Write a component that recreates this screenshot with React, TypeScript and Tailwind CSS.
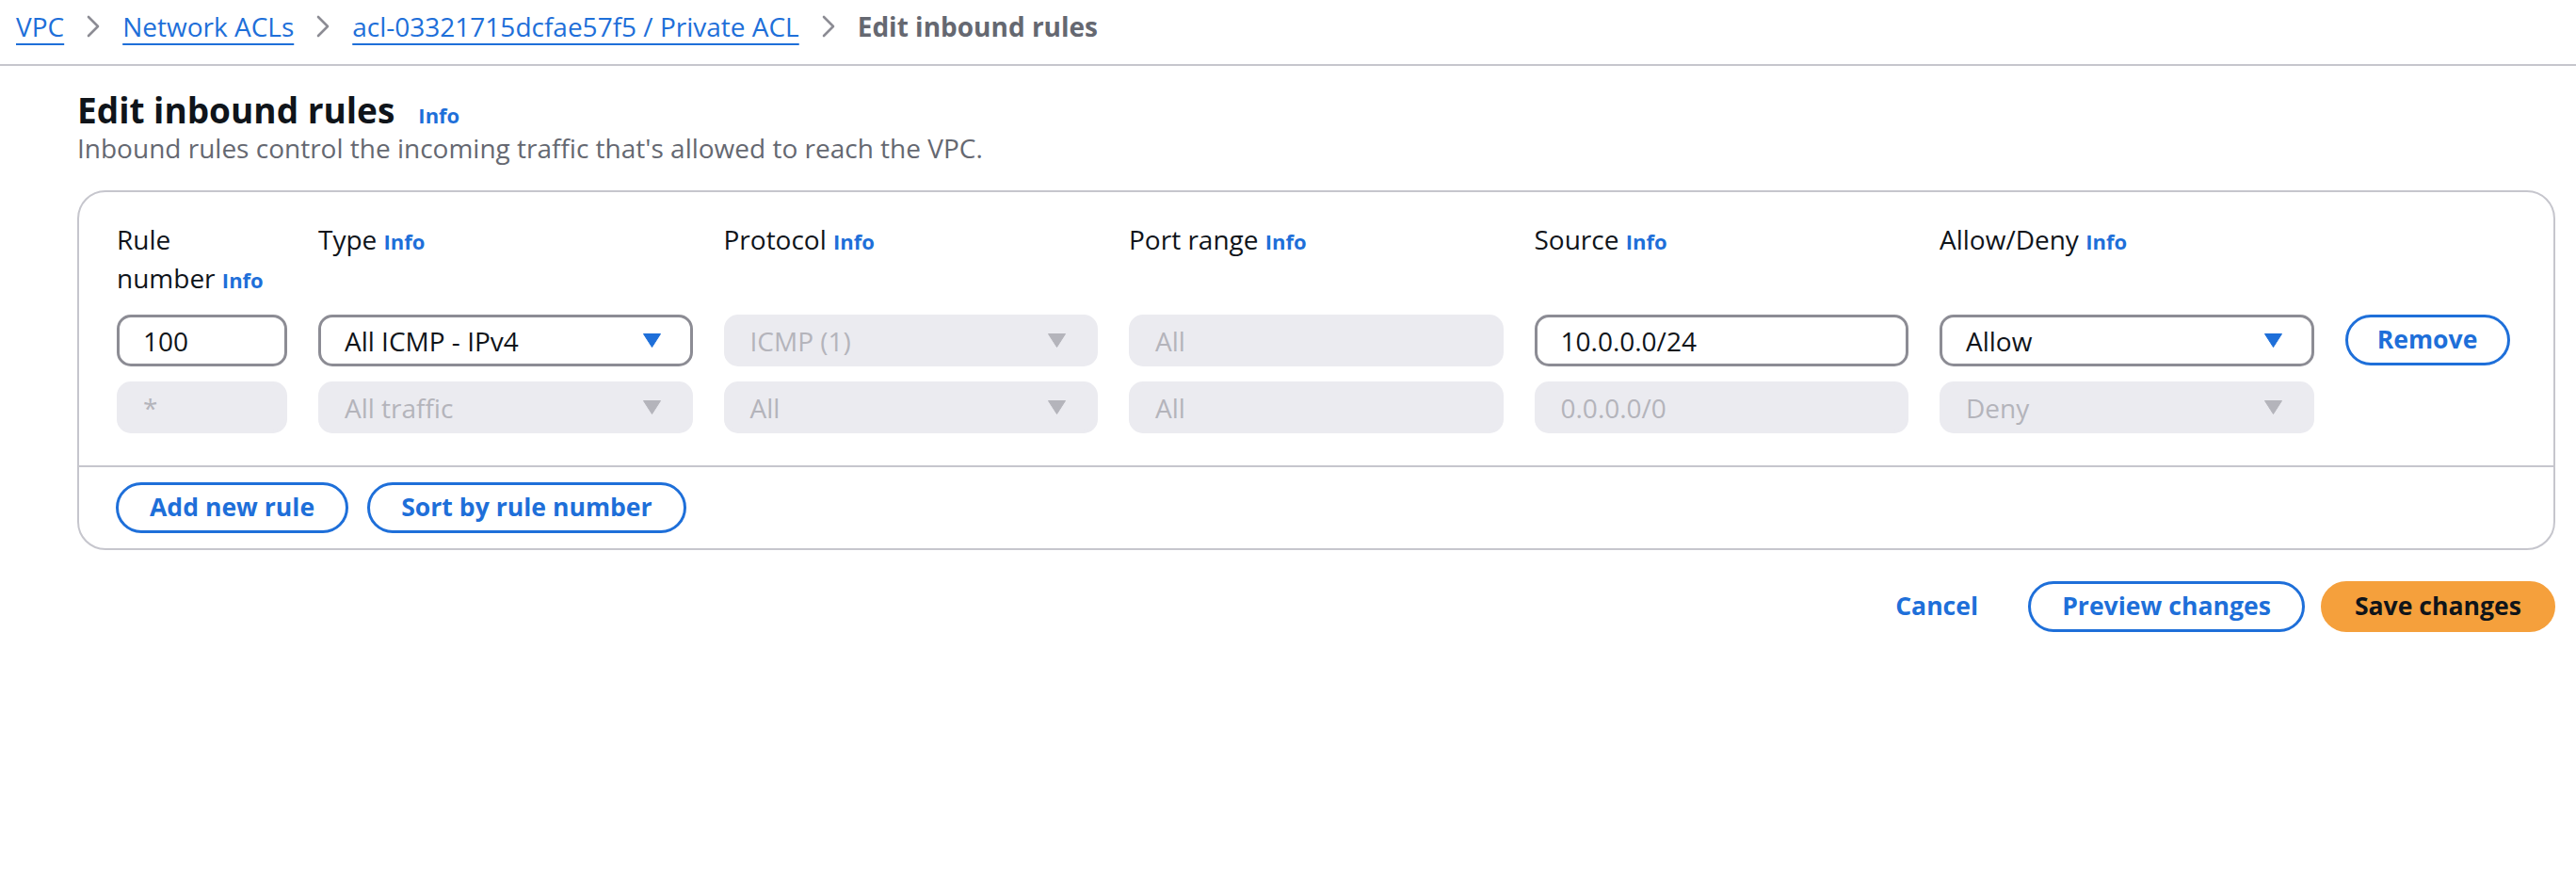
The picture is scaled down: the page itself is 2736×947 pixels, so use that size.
import React from "react";

const BLUE = "#1e6fd9";

function Chevron() {
  return (
    <svg width="14" height="24" viewBox="0 0 14 24" className="shrink-0">
      <polyline points="2,2 12,12 2,22" fill="none" stroke="#8c8c94" strokeWidth="2.6" strokeLinecap="round" strokeLinejoin="round" />
    </svg>
  );
}

function Tri({ disabled }: { disabled?: boolean }) {
  return (
    <svg width="19" height="15" viewBox="0 0 19 15" className="shrink-0">
      <polygon points="0.5,0.5 18.5,0.5 9.5,14.5" fill={disabled ? "#b4b4bb" : BLUE} stroke={disabled ? "#b4b4bb" : BLUE} strokeLinejoin="round" strokeWidth="1" />
    </svg>
  );
}

function Info() {
  return <span className="text-[22px] font-bold text-[#1e6fd9]">Info</span>;
}

function Field({ value, disabled, select }: { value: string; disabled?: boolean; select?: boolean }) {
  return (
    <div
      className={
        disabled
          ? "flex h-[55px] items-center justify-between rounded-[15px] border-[3px] border-[#ebebf0] bg-[#ebebf0] pl-[25px] pr-[31px] text-[28px] text-[#b4b4bb]"
          : "flex h-[55px] items-center justify-between rounded-[15px] border-[3px] border-[#8c8c94] bg-white pl-[25px] pr-[31px] text-[28px] text-[#0f141a]"
      }
    >
      <span className="whitespace-nowrap">{value}</span>
      {select ? <Tri disabled={disabled} /> : null}
    </div>
  );
}

function Label({ children }: { children: React.ReactNode }) {
  return <div className="text-[28px] leading-[41px] text-[#0f141a]">{children}</div>;
}

function OutlineButton({ children, className = "" }: { children: React.ReactNode; className?: string }) {
  return (
    <button
      className={
        "flex h-[54px] items-center justify-center whitespace-nowrap rounded-full border-[3px] border-[#1e6fd9] bg-white px-[33px] text-[26.6px] font-bold text-[#1e6fd9] " +
        className
      }
    >
      {children}
    </button>
  );
}

export default function App() {
  return (
    <div className="min-h-[947px] w-full bg-white" style={{ fontFamily: '"Open Sans", "Noto Sans", sans-serif' }}>
      {/* Breadcrumbs */}
      <div className="flex h-[68px] items-center gap-[24px] pb-[12px] pl-[17px] text-[28px]">
        <a className="text-[#1e6fd9] underline decoration-[2px] underline-offset-[7px]">VPC</a>
        <Chevron />
        <a className="text-[#1e6fd9] underline decoration-[2px] underline-offset-[7px]">Network ACLs</a>
        <Chevron />
        <a className="text-[#1e6fd9] underline decoration-[2px] underline-offset-[7px]">acl-03321715dcfae57f5 / Private ACL</a>
        <Chevron />
        <span className="font-bold text-[#656871]">Edit inbound rules</span>
      </div>
      <div className="h-[2px] w-full bg-[#c6c6cd]" />

      <div className="pl-[82px] pr-[22px]">
        {/* Header */}
        <div className="pt-[25px]">
          <div className="flex items-baseline gap-[25px]">
            <h1 className="text-[37px] font-bold leading-[44px] text-[#0f141a]">Edit inbound rules</h1>
            <Info />
          </div>
          <p className="text-[28px] leading-[37px] text-[#656871]">
            Inbound rules control the incoming traffic that's allowed to reach the VPC.
          </p>
        </div>

        {/* Container */}
        <div className="mt-[26px] rounded-[30px] border-2 border-[#c6c6cd]">
          <div className="px-[40px] pt-[30px] pb-[34px]">
            <div className="grid grid-cols-[181px_repeat(5,397.5px)_176px] gap-x-[33px] gap-y-[16px]">
              <Label>
                Rule
                <br />
                number <Info />
              </Label>
              <Label>
                Type <Info />
              </Label>
              <Label>
                Protocol <Info />
              </Label>
              <Label>
                Port range <Info />
              </Label>
              <Label>
                Source <Info />
              </Label>
              <Label>
                Allow/Deny <Info />
              </Label>
              <div />

              <Field value="100" />
              <Field value="All ICMP - IPv4" select />
              <Field value="ICMP (1)" select disabled />
              <Field value="All" disabled />
              <Field value="10.0.0.0/24" />
              <Field value="Allow" select />
              <OutlineButton className="w-[175px] px-0">Remove</OutlineButton>

              <Field value="*" disabled />
              <Field value="All traffic" select disabled />
              <Field value="All" select disabled />
              <Field value="All" disabled />
              <Field value="0.0.0.0/0" disabled />
              <Field value="Deny" select disabled />
              <div />
            </div>
          </div>
          <div className="h-[2px] w-full bg-[#c6c6cd]" />
          <div className="flex gap-[20px] px-[39px] pt-[16px] pb-[16px]">
            <OutlineButton>Add new rule</OutlineButton>
            <OutlineButton>Sort by rule number</OutlineButton>
          </div>
        </div>

        {/* Actions */}
        <div className="mt-[33px] flex justify-end gap-[17px]">
          <button className="flex h-[54px] items-center rounded-full border-[3px] border-transparent px-[33px] text-[26.6px] font-bold text-[#1e6fd9]">
            Cancel
          </button>
          <OutlineButton>Preview changes</OutlineButton>
          <button className="flex h-[54px] items-center rounded-full border-[3px] border-[#f5a03c] bg-[#f5a03c] px-[33px] text-[26.6px] font-bold text-[#0f141a]">
            Save changes
          </button>
        </div>
      </div>
    </div>
  );
}
